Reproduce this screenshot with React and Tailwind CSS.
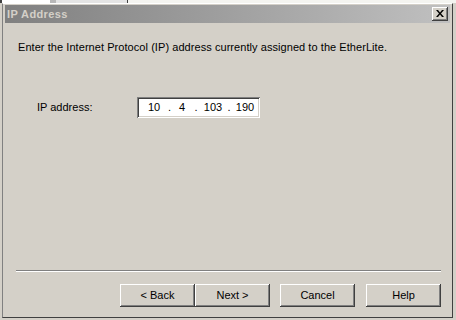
const raised =
  'shadow-[inset_-1px_-1px_#404040,inset_1px_1px_#ffffff,inset_-2px_-2px_#808080,inset_2px_2px_#d4d0c8]';
const sunken =
  'shadow-[inset_1px_1px_#808080,inset_-1px_-1px_#ffffff,inset_2px_2px_#404040,inset_-2px_-2px_#d4d0c8]';

function WinButton({ children, className = '' }) {
  return (
    <button
      className={`h-[23px] w-[75px] bg-[#d4d0c8] text-[11px] text-black leading-none flex items-center justify-center ${raised} ${className}`}
    >
      {children}
    </button>
  );
}

function CloseButton() {
  return (
    <div className={`w-[16px] h-[14px] bg-[#d4d0c8] flex items-center justify-center ${raised}`}>
      <svg width="8" height="7" viewBox="0 0 8 7" className="mb-[1px]">
        <path d="M0 0h2l2 2.5L6 0h2L5 3.5 8 7H6L4 4.5 2 7H0l3-3.5z" fill="#000" />
      </svg>
    </div>
  );
}

export default function App() {
  return (
    <div
      className="w-[456px] h-[320px] bg-[#d4d0c8] overflow-hidden text-black"
      style={{ fontFamily: '"Liberation Sans", Arial, sans-serif' }}
    >
      {/* window behind the dialog */}
      <div className="h-[3px] flex">
        <div className="w-[2px] bg-[#404040]" />
        <div className="w-[48px] bg-white" />
        <div className="w-[6px] bg-[#b8b8b8]" />
        <div className="w-[71px] bg-[#e4e4e4]" />
        <div className="w-[1px] bg-[#404040]" />
        <div className="flex-1 bg-[#f4f4f0]" />
      </div>

      <div className="ml-[2px] w-[451px] h-[315px] border-l border-l-[#808080] border-t border-t-white border-r border-r-[#404040] border-b border-b-[#404040] pt-[1px] px-[2px] flex flex-col">
        {/* title bar */}
        <div className="h-[18px] bg-gradient-to-r from-[#808080] to-[#c0c0c0] flex items-center justify-between pl-[2px] pr-[2px]">
          <span className="text-[11px] font-bold text-[#d4d0c8] leading-none tracking-[0.4px]">IP Address</span>
          <CloseButton />
        </div>

        <div className="flex flex-col">
          <p className="mt-[18px] ml-[13px] h-[13px] text-[11px] leading-[13px] tracking-[0.06px]">
            Enter the Internet Protocol (IP) address currently assigned to the EtherLite.
          </p>

          <div className="mt-[43px] flex items-center">
            <span className="ml-[32px] w-[100px] text-[11px] leading-none">IP address:</span>
            <div className={`w-[123px] h-[21px] bg-white flex items-center pl-[4px] text-[11px] leading-none ${sunken}`}>
              <span className="w-[26px] text-center">10</span>
              <span className="w-[5px] text-center">.</span>
              <span className="w-[20px] text-center">4</span>
              <span className="w-[8px] text-center">.</span>
              <span className="w-[26px] text-center">103</span>
              <span className="w-[6px] text-center">.</span>
              <span className="w-[26px] text-center">190</span>
            </div>
          </div>

          <div className="mt-[152px] ml-[11px] w-[425px] border-t border-t-[#808080] border-b border-b-white" />

          <div className="mt-[12px] flex">
            <WinButton className="ml-[115px]">&lt; Back</WinButton>
            <WinButton>Next &gt;</WinButton>
            <WinButton className="ml-[10px]">Cancel</WinButton>
            <WinButton className="ml-[11px]">Help</WinButton>
          </div>
        </div>
      </div>
    </div>
  );
}
